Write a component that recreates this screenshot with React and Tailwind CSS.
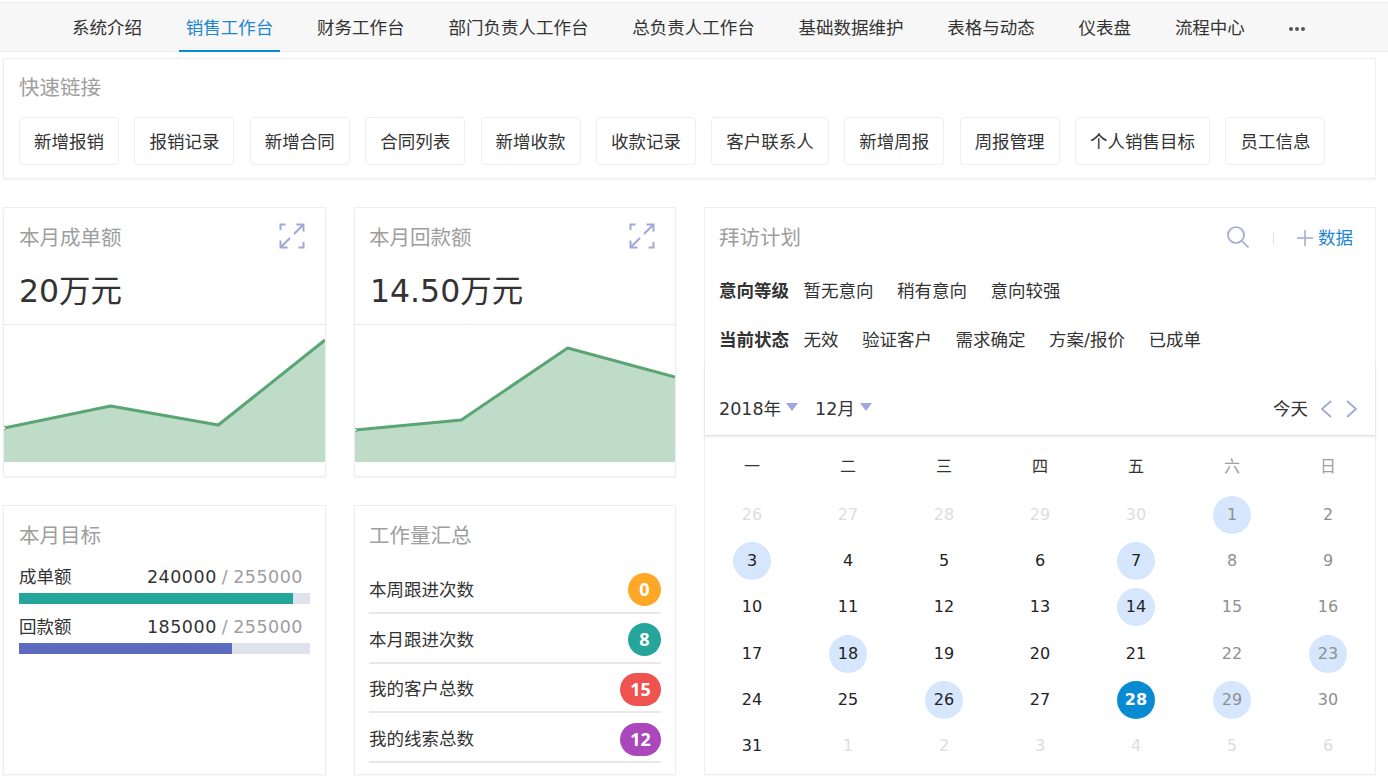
const FONT = "font-['DejaVu_Sans','Noto_Sans_CJK_SC',sans-serif]"

const NAV = ['系统介绍', '销售工作台', '财务工作台', '部门负责人工作台', '总负责人工作台', '基础数据维护', '表格与动态', '仪表盘', '流程中心']
const LINKS = ['新增报销', '报销记录', '新增合同', '合同列表', '新增收款', '收款记录', '客户联系人', '新增周报', '周报管理', '个人销售目标', '员工信息']
const WEEK = ['一', '二', '三', '四', '五', '六', '日']
const LEVELS = ['暂无意向', '稍有意向', '意向较强']
const STATES = ['无效', '验证客户', '需求确定', '方案/报价', '已成单']
const MARKED = [1, 3, 7, 14, 18, 23, 26, 29]

const days = [
  ...[26, 27, 28, 29, 30].map(d => ({ d, out: true })),
  ...Array.from({ length: 31 }, (_, i) => ({ d: i + 1 })),
  ...[1, 2, 3, 4, 5, 6].map(d => ({ d, out: true })),
]

function ExpandIcon() {
  return (
    <svg width="26" height="26" viewBox="0 0 26 26" fill="none" stroke="#9fa8da" strokeWidth="2" className="mt-[-5px] mr-[-1px]">
      <path d="M1.500 7V1.500H6.500M24.500 19V24.500H19.500" />
      <path d="M15 11L24 2M17.500 1.500h7V8.500M11 15L2 24M1.500 17.500v7H8.500" />
    </svg>
  )
}

function Card({ title, right, children, className, titlePad = 'pl-[15px]' }) {
  return (
    <div className={'bg-white border border-[#eeeeee] shadow-[0_1px_2px_rgba(0,0,0,0.05)] ' + className}>
      {title && (
        <div className={'flex items-center justify-between h-[60px] pr-[21px] ' + titlePad}>
          <span className="text-[20.500px] text-[#9e9e9e]">{title}</span>
          {right}
        </div>
      )}
      {children}
    </div>
  )
}

function AmountCard({ title, value, points, area, titlePad }) {
  return (
    <Card title={title} titlePad={titlePad} right={<ExpandIcon />} className="h-[270px]">
      <div className="h-[56px] pl-[15px] text-[31.500px] leading-[46px] text-[#333333]">{value}</div>
      <div className="border-t border-[#e8e8e8]">
        <svg viewBox="0 0 322 137" className="block w-full h-[137px]" preserveAspectRatio="none">
          <path d={area} fill="#bfdcc9" />
          <polyline points={points} fill="none" stroke="#5aa574" strokeWidth="3" strokeLinejoin="round" />
          <circle cx="0" cy={points.split(',')[1].split(' ')[0]} r="2" fill="#fff" stroke="#5aa574" />
        </svg>
      </div>
    </Card>
  )
}

function Progress({ label, now, total, pct, color }) {
  return (
    <div className="mb-[9px]">
      <div className="flex items-center justify-between h-[28px] pr-[7px] text-[17.500px]">
        <span className="text-[#333333]">{label}</span>
        <span className="text-[#333333] tracking-[0.5px]">{now}<span className="text-[#9e9e9e] mx-[5px]">/</span><span className="text-[#9e9e9e]">{total}</span></span>
      </div>
      <div className="h-[11px] mt-[2px] bg-[#dee2ea]">
        <div className={'h-full ' + color} style={{ width: pct + '%' }} />
      </div>
    </div>
  )
}

function WorkRow({ label, value, color, wide }) {
  return (
    <div className="flex items-center justify-between h-[49.800px] pt-[4px] border-b-2 border-[#e8e8e8] text-[17.500px] text-[#333333]">
      <span>{label}</span>
      <span className={"flex items-center justify-center h-[33px] rounded-full text-white font-bold font-['Open_Sans'] text-[18px] " + (wide ? 'w-[41px] ' : 'w-[33px] ') + color}>{value}</span>
    </div>
  )
}

function FilterRow({ label, items }) {
  return (
    <div className="flex items-center h-[49px] pl-[14px] text-[17.500px] text-[#333333]">
      <span className="font-bold mr-[14.500px]">{label}</span>
      <div className="flex gap-[23.500px]">
        {items.map(x => <span key={x}>{x}</span>)}
      </div>
    </div>
  )
}

function Caret() {
  return <span className="inline-block ml-[5px] w-0 h-0 border-x-[6px] border-x-transparent border-t-[8px] border-t-[#9fa8da] relative top-[-2px]" />
}

export default function App() {
  return (
    <div className={'w-[1388px] h-[780px] overflow-hidden bg-white ' + FONT}>
      <div className="mt-[2px] h-[50px] flex pl-[65px] bg-[#f7f7f7] border-t border-b border-[#ececec] text-[17.500px] text-[#333333]">
        {NAV.map((n, i) => (
          <div key={n} className={'relative flex items-center justify-center px-[7px] pt-[2px] h-full mr-[29.800px] ' + (i === 1 ? 'text-[#2185d0]' : '')}>
            {n}
            {i === 1 && <div className="absolute left-0 right-0 bottom-[-1px] h-[2px] bg-[#0a8bd1]" />}
          </div>
        ))}
        <div className="flex items-center gap-[2px] ml-[7px] pt-[3px]">
          <i className="w-[4px] h-[4px] rounded-full bg-[#555555]" />
          <i className="w-[4px] h-[4px] rounded-full bg-[#555555]" />
          <i className="w-[4px] h-[4px] rounded-full bg-[#555555]" />
        </div>
      </div>

      <div className="ml-[3px] mr-[12px] mt-[6px] h-[121px] bg-white border border-[#eeeeee] shadow-[0_1px_2px_rgba(0,0,0,0.05)]">
        <div className="h-[58px] flex items-center pl-[15px] text-[20.500px] text-[#9e9e9e]">快速链接</div>
        <div className="flex gap-[15.400px] pl-[15px]">
          {LINKS.map(l => (
            <div key={l} className="h-[48px] px-[14px] pt-[2px] flex items-center rounded-[4px] border border-[#eeeeee] text-[17.500px] text-[#333333] whitespace-nowrap">{l}</div>
          ))}
        </div>
      </div>

      <div className="ml-[3px] mr-[12px] mt-[28px] flex gap-[28px]">
        <div className="w-[323px] flex flex-col gap-[28px]">
          <AmountCard title="本月成单额" value="20万元" points="0,103 107,81 215,100 322,15" area="M0 103L107 81L215 100L322 15V137H0Z" />
          <Card title="本月目标" className="h-[270px]">
            <div className="px-[15px] mt-[-3px]">
              <Progress label="成单额" now="240000" total="255000" pct={94.200} color="bg-[#26a69a]" />
              <Progress label="回款额" now="185000" total="255000" pct={73.200} color="bg-[#5c6bc0]" />
            </div>
          </Card>
        </div>
        <div className="w-[322px] flex flex-col gap-[28px]">
          <AmountCard title="本月回款额" titlePad="pl-[14px]" value="14.50万元" points="0,105 107,95 214,23 322,52" area="M0 105L107 95L214 23L322 52V137H0Z" />
          <Card title="工作量汇总" titlePad="pl-[14px]" className="h-[270px]">
            <div className="px-[14px] mt-[-2px]">
              <WorkRow label="本周跟进次数" value="0" color="bg-[#ffa726]" />
              <WorkRow label="本月跟进次数" value="8" color="bg-[#26a69a]" />
              <WorkRow label="我的客户总数" value="15" color="bg-[#ef5350]" wide />
              <WorkRow label="我的线索总数" value="12" color="bg-[#ab47bc]" wide />
            </div>
          </Card>
        </div>
        <Card className="flex-1 h-[568px]">
          <div className="flex items-center justify-between h-[60px] pl-[14px] pr-[22px]">
            <span className="text-[20.500px] text-[#9e9e9e]">拜访计划</span>
            <div className="flex items-center">
              <svg width="24" height="24" viewBox="0 0 24 24" fill="none" stroke="#9fa8da" strokeWidth="1.700" className="mt-[-3px]">
                <circle cx="10" cy="10" r="8" />
                <path d="M16 16L22.500 22.500" />
              </svg>
              <i className="w-px h-[14px] bg-[#e5e5e5] mx-[23px]" />
              <svg width="16" height="16" viewBox="0 0 16 16" fill="none" stroke="#9fa8da" strokeWidth="1.500">
                <path d="M8 0V16M0 8H16" />
              </svg>
              <span className="ml-[5px] text-[17.500px] text-[#2185d0]">数据</span>
            </div>
          </div>
          <div className="mt-[-1px]">
            <FilterRow label="意向等级" items={LEVELS} />
            <FilterRow label="当前状态" items={STATES} />
          </div>
          <div className="flex items-center justify-between h-[71px] pt-[18px] pl-[14px] pr-[17px] text-[17.500px] text-[#333333] border-b border-[#e0e0e0] shadow-[0_1px_2px_rgba(0,0,0,0.08)]">
            <div className="flex items-center">
              <span>2018年</span><Caret />
              <span className="ml-[17px]">12月</span><Caret />
            </div>
            <div className="flex items-center">
              <span className="mr-[12px]">今天</span>
              <svg width="12" height="18" viewBox="0 0 12 18" fill="none" stroke="#9fa8da" strokeWidth="1.800"><path d="M11 1L2 9L11 17" /></svg>
              <svg width="12" height="18" viewBox="0 0 12 18" fill="none" stroke="#9fa8da" strokeWidth="1.800" className="ml-[14px]"><path d="M1 1L10 9L1 17" /></svg>
            </div>
          </div>
          <div className="grid grid-cols-7 -mx-px pt-[6px] text-[16px]">
            {WEEK.map((w, i) => (
              <div key={w} className={'h-[50px] flex items-center justify-center ' + (i > 4 ? 'text-[#9e9e9e]' : 'text-[#333333]')}>{w}</div>
            ))}
            {days.map((x, i) => {
              const wk = i % 7 > 4
              const today = !x.out && x.d === 28
              const mark = !x.out && MARKED.includes(x.d)
              const tone = x.out ? 'text-[#dddddd]' : today ? 'text-white font-bold' : wk ? 'text-[#8f8f8f]' : 'text-[#222222]'
              return (
                <div key={i} className="h-[46.200px] flex items-center justify-center">
                  <span className={'w-[38px] h-[38px] rounded-full flex items-center justify-center ' + tone + (today ? ' bg-[#0a8bd1]' : mark ? ' bg-[#d6e6fd]' : '')}>{x.d}</span>
                </div>
              )
            })}
          </div>
        </Card>
      </div>
    </div>
  )
}
